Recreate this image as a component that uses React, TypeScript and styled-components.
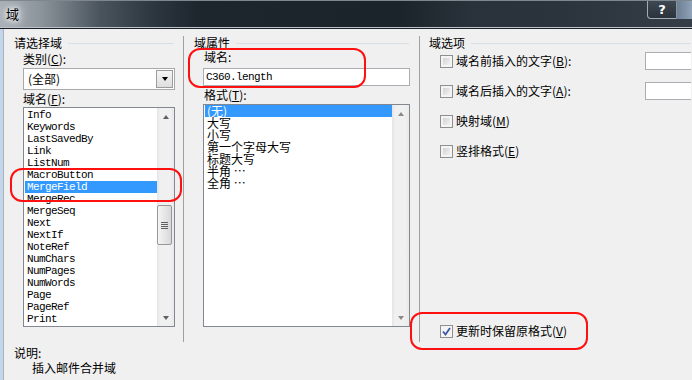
import React from "react";
import styled, { createGlobalStyle } from "styled-components";

const cjk = `"Noto Sans CJK SC", "Noto Sans CJK JP", "Noto Sans", sans-serif`;
const mono = `"Liberation Mono", "DejaVu Sans Mono", monospace`;

const GlobalStyle = createGlobalStyle`
  html, body {
    margin: 0;
    padding: 0;
    background: #f0f0f0;
    overflow: hidden;
  }
  body {
    font-family: ${cjk};
    font-size: 12px;
    color: #000;
  }
`;

const fieldNames = [
  "Info",
  "Keywords",
  "LastSavedBy",
  "Link",
  "ListNum",
  "MacroButton",
  "MergeField",
  "MergeRec",
  "MergeSeq",
  "Next",
  "NextIf",
  "NoteRef",
  "NumChars",
  "NumPages",
  "NumWords",
  "Page",
  "PageRef",
  "Print",
];

const formats = ["(无)", "大写", "小写", "第一个字母大写", "标题大写", "半角 …", "全角 …"];

type Option = { label: string; key: string; checked?: boolean; input?: boolean };

const options: Option[] = [
  { label: "域名前插入的文字", key: "B", input: true },
  { label: "域名后插入的文字", key: "A", input: true },
  { label: "映射域", key: "M" },
  { label: "竖排格式", key: "E" },
];

const Mn: React.FC<{ k: string; colon?: boolean }> = ({ k, colon }) => (
  <>
    (<u>{k}</u>){colon ? ":" : ""}
  </>
);

const App: React.FC = () => {
  return (
    <Window>
      <GlobalStyle />
      <TitleBar>
        <TitleText>域</TitleText>
        <CaptionButtons>
          <HelpButton>?</HelpButton>
          <CloseStub />
        </CaptionButtons>
      </TitleBar>
      <TitleRule />
      <Frame>
        <Edge />
        <Client>
          <Columns>
            <Column $width={180} $pad={10} $divider>
              <GroupHeader $right={9}>
                <span>请选择域</span>
                <Rule />
              </GroupHeader>
              <Label $indent={9} $top={2}>
                类别<Mn k="C" colon />
              </Label>
              <Combo>
                <ComboText>(全部)</ComboText>
                <DropButton>
                  <Arrow $dir="down" $color="#000" />
                </DropButton>
              </Combo>
              <Label $indent={9} $top={2}>
                域名<Mn k="F" colon />
              </Label>
              <ListBox $width={152} $height={220} $top={1} $indent={9}>
                <Items $padTop={1}>
                  {fieldNames.map((name) => (
                    <Item key={name} $selected={name === "MergeField"} $mono>
                      {name}
                    </Item>
                  ))}
                </Items>
                <ScrollBar>
                  <ArrowButton>
                    <Arrow $dir="up" />
                  </ArrowButton>
                  <Track>
                    <Thumb $offset={80}>
                      <Grip />
                    </Thumb>
                  </Track>
                  <ArrowButton>
                    <Arrow $dir="down" />
                  </ArrowButton>
                </ScrollBar>
              </ListBox>
            </Column>

            <Column $width={236} $pad={10} $divider>
              <GroupHeader $right={10}>
                <span>域属性</span>
                <Rule />
              </GroupHeader>
              <Label $indent={10} $top={0}>
                域名:
              </Label>
              <TextInput $indent={9}>C360.length</TextInput>
              <Label $indent={10} $top={2}>
                格式<Mn k="T" colon />
              </Label>
              <ListBox $width={207} $height={223} $top={2} $indent={9}>
                <Items $padTop={0}>
                  {formats.map((f, i) => (
                    <Item key={f} $selected={i === 0}>
                      {f}
                    </Item>
                  ))}
                </Items>
                <ScrollBar>
                  <ArrowButton>
                    <Arrow $dir="up" $color="#8a8a8a" />
                  </ArrowButton>
                  <Track />
                  <ArrowButton>
                    <Arrow $dir="down" $color="#8a8a8a" />
                  </ArrowButton>
                </ScrollBar>
              </ListBox>
            </Column>

            <Column $width={271} $pad={9}>
              <GroupHeader $right={0}>
                <span>域选项</span>
                <Rule />
              </GroupHeader>
              {options.map((o, i) => (
                <OptionRow key={o.key} $top={i === 0 ? 2 : 12}>
                  <CheckBox />
                  <CheckText>
                    {o.label}
                    <Mn k={o.key} colon={o.input} />
                  </CheckText>
                  {o.input && <SideInput />}
                </OptionRow>
              ))}
              <OptionRow $top={0} $bottom>
                <CheckBox $checked>
                  <svg width="9" height="9" viewBox="0 0 9 9">
                    <path d="M1 4.5 L3.5 7.5 L8 1" fill="none" stroke="#3b5aa5" strokeWidth="1.8" />
                  </svg>
                </CheckBox>
                <CheckText>
                  更新时保留原格式<Mn k="V" />
                </CheckText>
              </OptionRow>
            </Column>
          </Columns>

          <Description>
            <div>说明:</div>
            <DescBody>插入邮件合并域</DescBody>
          </Description>
        </Client>
      </Frame>

      <Mark style={{ left: 10, top: 168, width: 172, height: 34 }} />
      <Mark style={{ left: 188, top: 48, width: 178, height: 40 }} />
      <Mark style={{ left: 410, top: 312, width: 178, height: 38 }} />
    </Window>
  );
};

const Window = styled.div`
  position: relative;
  width: 692px;
  height: 380px;
  display: flex;
  flex-direction: column;
  overflow: hidden;
  background: #f0f0f0;
`;

const TitleBar = styled.div`
  height: 26px;
  display: flex;
  align-items: flex-start;
  border-top: 1px solid #7e868e;
  border-bottom: 1px solid #bcc4cb;
  background: linear-gradient(
    90deg,
    #a9b0b6 0px,
    #8d959c 40px,
    #4a545d 100px,
    #2e3841 150px,
    #1d252d 200px,
    #1c242b 400px,
    #29323a 470px,
    #2b343c 560px,
    #353e47 692px
  );
`;

const TitleText = styled.div`
  padding-left: 6px;
  line-height: 25px;
  font-size: 13px;
  color: #000;
  text-shadow: 0 0 4px #fff, 0 0 8px #fff, 0 0 12px #fff;
`;

const CaptionButtons = styled.div`
  margin-left: auto;
  display: flex;
  height: 18px;
`;

const HelpButton = styled.div`
  width: 28px;
  height: 17px;
  border-left: 1px solid #a3abb3;
  border-bottom: 1px solid #a3abb3;
  border-right: 1px solid #8a939c;
  border-bottom-left-radius: 4px;
  background: linear-gradient(180deg, #3e4852, #2a333c);
  color: #fff;
  font-family: "DejaVu Sans", sans-serif;
  font-weight: bold;
  font-size: 13px;
  line-height: 17px;
  text-align: center;
`;

const CloseStub = styled.div`
  width: 15px;
  height: 18px;
  background: linear-gradient(90deg, #6d7f95, #90a2b8);
`;

const TitleRule = styled.div`
  height: 1px;
  background: #1b2127;
`;

const Frame = styled.div`
  flex: 1;
  display: flex;
`;

const Edge = styled.div`
  width: 4px;
  background: linear-gradient(90deg, #c4d6ea 0 3px, #a6b2be 3px 4px);
`;

const Client = styled.div`
  flex: 1;
  display: flex;
  flex-direction: column;
`;

const Columns = styled.div`
  display: flex;
  margin-top: 7px;
  height: 306px;
`;

const Column = styled.div<{ $width: number; $pad: number; $divider?: boolean }>`
  width: ${(p) => p.$width}px;
  padding-left: ${(p) => p.$pad}px;
  box-sizing: border-box;
  display: flex;
  flex-direction: column;
  flex-shrink: 0;
  border-right: ${(p) => (p.$divider ? "1px solid #a0a0a0" : "none")};
`;

const GroupHeader = styled.div<{ $right: number }>`
  display: flex;
  align-items: center;
  height: 14px;
  line-height: 14px;
  margin-right: ${(p) => p.$right}px;
  white-space: nowrap;
`;

const Rule = styled.div`
  flex: 1;
  height: 1px;
  margin-left: 6px;
  background: #d5dfe5;
`;

const Label = styled.div<{ $indent: number; $top: number }>`
  margin-left: ${(p) => p.$indent}px;
  margin-top: ${(p) => p.$top}px;
  height: 14px;
  line-height: 14px;
  white-space: nowrap;
  u {
    text-underline-offset: 1px;
  }
`;

const Combo = styled.div`
  margin: 2px 0 0 9px;
  width: 152px;
  height: 22px;
  box-sizing: border-box;
  border: 1px solid #a9a9a9;
  background: #fff;
  display: flex;
`;

const ComboText = styled.div`
  flex: 1;
  padding-left: 4px;
  line-height: 20px;
`;

const DropButton = styled.div`
  width: 17px;
  margin: 1px;
  box-sizing: border-box;
  border: 1px solid #9c9c9c;
  background: linear-gradient(180deg, #f6f6f6, #dedede);
  display: flex;
  align-items: center;
  justify-content: center;
`;

const Arrow = styled.div<{ $dir: "up" | "down"; $color?: string }>`
  width: 0;
  height: 0;
  border-left: 3.5px solid transparent;
  border-right: 3.5px solid transparent;
  ${(p) =>
    p.$dir === "up"
      ? `border-bottom: 4px solid ${p.$color || "#606060"};`
      : `border-top: 4px solid ${p.$color || "#606060"};`}
`;

const ListBox = styled.div<{ $width: number; $height: number; $top: number; $indent: number }>`
  margin: ${(p) => p.$top}px 0 0 ${(p) => p.$indent}px;
  width: ${(p) => p.$width}px;
  height: ${(p) => p.$height}px;
  box-sizing: border-box;
  border: 1px solid #828790;
  background: #fff;
  display: flex;
`;

const Items = styled.div<{ $padTop: number }>`
  flex: 1;
  min-width: 0;
  padding: ${(p) => p.$padTop}px 0 0 1px;
  display: flex;
  flex-direction: column;
`;

const Item = styled.div<{ $selected?: boolean; $mono?: boolean }>`
  height: 12px;
  line-height: 12px;
  padding-left: 2px;
  white-space: nowrap;
  overflow: visible;
  background: ${(p) => (p.$selected ? "#3399ff" : "transparent")};
  color: ${(p) => (p.$selected ? "#fff" : "#000")};
  font-family: ${(p) => (p.$mono ? mono : cjk)};
  font-size: ${(p) => (p.$mono ? "11px" : "12px")};
  letter-spacing: ${(p) => (p.$mono ? "-0.6px" : "0")};
`;

const ScrollBar = styled.div`
  width: 17px;
  flex-shrink: 0;
  display: flex;
  flex-direction: column;
  background: linear-gradient(90deg, #e4e4e4 0, #f0f0f0 3px, #f0f0f0 13px, #e9e9e9 17px);
`;

const ArrowButton = styled.div`
  height: 17px;
  display: flex;
  align-items: center;
  justify-content: center;
`;

const Track = styled.div`
  flex: 1;
`;

const Thumb = styled.div<{ $offset: number }>`
  margin-top: ${(p) => p.$offset}px;
  width: 15px;
  height: 40px;
  box-sizing: border-box;
  border: 1px solid #979797;
  border-radius: 2px;
  background: linear-gradient(90deg, #f4f4f4, #e6e6e6 50%, #d8d8d8);
  display: flex;
  align-items: center;
  justify-content: center;
`;

const Grip = styled.div`
  width: 7px;
  height: 7px;
  background: repeating-linear-gradient(180deg, #606060 0 1px, transparent 1px 2px);
`;

const TextInput = styled.div<{ $indent: number }>`
  margin: 4px 0 0 ${(p) => p.$indent}px;
  width: 207px;
  height: 18px;
  box-sizing: border-box;
  border: 1px solid #abadb3;
  background: #fff;
  padding-left: 2px;
  line-height: 16px;
  font-family: ${mono};
  font-size: 11px;
  letter-spacing: -0.6px;
`;

const OptionRow = styled.div<{ $top: number; $bottom?: boolean }>`
  display: flex;
  align-items: center;
  height: 18px;
  margin-left: 11px;
  margin-top: ${(p) => (p.$bottom ? "auto" : `${p.$top}px`)};
  margin-bottom: ${(p) => (p.$bottom ? "2px" : "0")};
`;

const CheckBox = styled.div<{ $checked?: boolean }>`
  width: 13px;
  height: 13px;
  box-sizing: border-box;
  flex-shrink: 0;
  border: 1px solid #8e8f8f;
  box-shadow: inset 0 0 0 2px #f4f4f4;
  background: ${(p) =>
    p.$checked ? "#f4f4f4" : "linear-gradient(135deg, #c9c9c9 0%, #f4f4f4 85%)"};
  display: flex;
  align-items: center;
  justify-content: center;
`;

const CheckText = styled.div`
  margin-left: 3px;
  line-height: 18px;
  white-space: nowrap;
`;

const SideInput = styled.div`
  margin-left: auto;
  width: 46px;
  height: 18px;
  box-sizing: border-box;
  border: 1px solid #abadb3;
  border-right: none;
  background: #fff;
  flex-shrink: 0;
`;

const Description = styled.div`
  padding: 3px 0 0 10px;
  line-height: 15px;
`;

const DescBody = styled.div`
  margin-left: 18px;
`;

const Mark = styled.div`
  position: absolute;
  box-sizing: border-box;
  border: 2px solid #ff1010;
  border-radius: 12px;
  pointer-events: none;
`;

export default App;
